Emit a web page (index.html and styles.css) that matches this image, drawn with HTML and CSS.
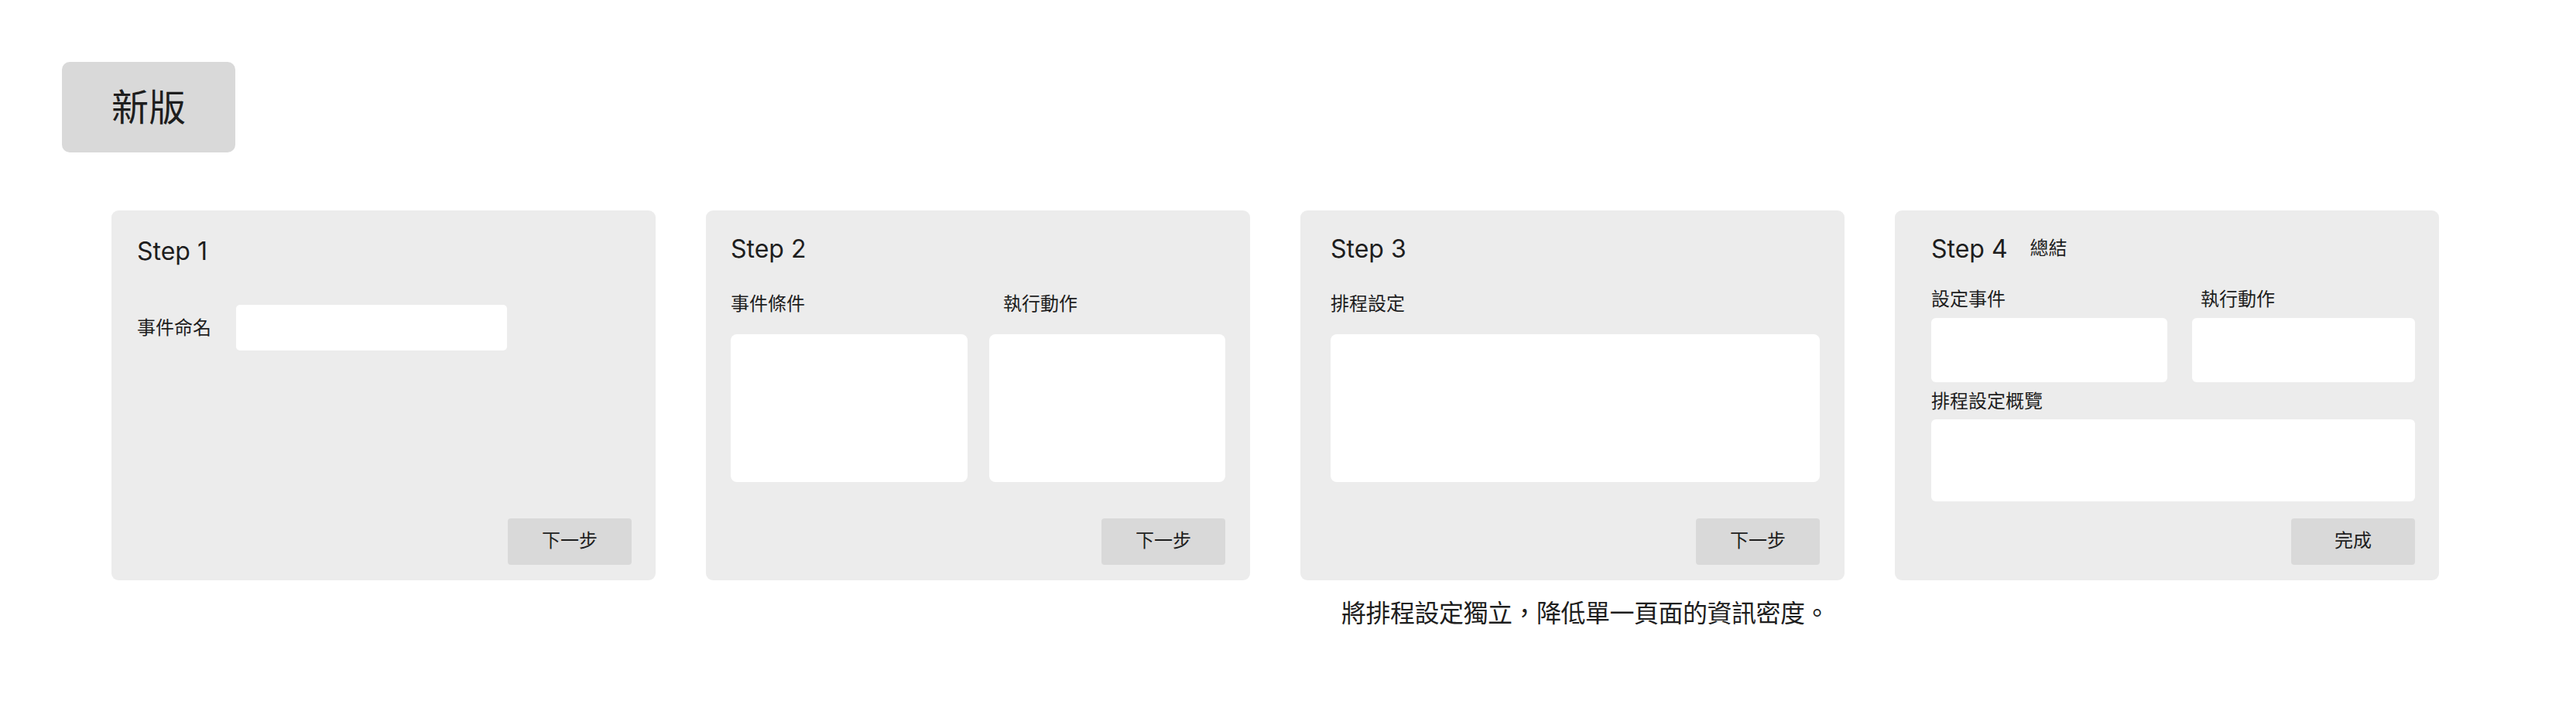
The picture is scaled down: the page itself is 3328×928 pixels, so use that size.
FILE: index.html
```html
<!DOCTYPE html>
<html lang="zh-Hant">
<head>
  <meta charset="UTF-8">
  <title>新版流程</title>
  <link rel="stylesheet" href="styles.css">
</head>
<body>
  <div class="page">
    <div class="tag">新版</div>

    <div class="steps">
      <div class="card card-1">
        <div class="card-head">
          <h3>Step 1</h3>
        </div>
        <div class="field">
          <label>事件命名</label>
          <div class="input"></div>
        </div>
        <button class="btn">下一步</button>
      </div>

      <div class="card card-2">
        <div class="card-head">
          <h3>Step 2</h3>
        </div>
        <div class="cols">
          <div class="col">
            <label>事件條件</label>
            <div class="box box-tall"></div>
          </div>
          <div class="col">
            <label class="shift">執行動作</label>
            <div class="box box-tall"></div>
          </div>
        </div>
        <button class="btn">下一步</button>
      </div>

      <div class="card card-3">
        <div class="card-head">
          <h3>Step 3</h3>
        </div>
        <div class="col">
          <label>排程設定</label>
          <div class="box box-tall"></div>
        </div>
        <button class="btn">下一步</button>
      </div>

      <div class="card card-4">
        <div class="card-head">
          <h3>Step 4</h3>
          <span class="sub">總結</span>
        </div>
        <div class="summary">
          <div class="col">
            <label>設定事件</label>
            <div class="box box-short"></div>
          </div>
          <div class="col">
            <label class="shift-sm">執行動作</label>
            <div class="box box-short"></div>
          </div>
          <div class="col wide">
            <label>排程設定概覽</label>
            <div class="box box-mid"></div>
          </div>
        </div>
        <button class="btn">完成</button>
      </div>

      <p class="note">將排程設定獨立，降低單一頁面的資訊密度。</p>
    </div>
  </div>
</body>
</html>
```

FILE: styles.css
```css
body {
  margin: 0;
  background: #fff;
  color: #1e1e1e;
  font-family: Inter, "Noto Sans CJK TC", sans-serif;
}
.page {
  padding: 80px 0 0 80px;
}
.tag {
  width: 224px;
  height: 117px;
  background: #d9d9d9;
  border-radius: 10px;
  display: flex;
  align-items: center;
  justify-content: center;
  font-size: 48px;
  line-height: 1;
}
.steps {
  margin: 75px 0 0 64px;
  display: grid;
  grid-template-columns: repeat(4, 703px);
  column-gap: 65px;
  row-gap: 24px;
}
.card {
  height: 478px;
  box-sizing: border-box;
  background: #ececec;
  border-radius: 9px;
  padding: 34px 32px 20px 32px;
  display: flex;
  flex-direction: column;
}
.card-1 { padding-top: 37px; padding-left: 33px; padding-right: 31px; }
.card-3 { padding-left: 39px; }
.card-4 { padding-left: 47px; padding-right: 31px; }

.card-head {
  display: flex;
  align-items: flex-start;
  gap: 29px;
}
h3 {
  margin: 0;
  font-size: 32px;
  font-weight: 400;
  line-height: 1;
}
.sub {
  font-size: 24px;
  line-height: 1;
  margin-top: 3px;
}
label {
  font-size: 24px;
  line-height: 1;
  display: block;
}
.field {
  margin-top: 53px;
  display: flex;
  align-items: center;
  gap: 35px;
}
.field label {
  width: 93px;
  white-space: nowrap;
}
.input {
  width: 350px;
  height: 59px;
  background: #fff;
  border-radius: 5px;
}
.cols {
  margin-top: 43px;
  display: grid;
  grid-template-columns: 306px 305px;
  column-gap: 28px;
}
.card-3 .col {
  margin-top: 43px;
}
.col {
  display: flex;
  flex-direction: column;
}
.card-2 .col label,
.card-3 .col label {
  margin-bottom: 27px;
}
.shift { padding-left: 18px; }
.shift-sm { padding-left: 11px; }
.box {
  background: #fff;
  border-radius: 8px;
}
.box-tall { height: 191px; }
.summary {
  margin-top: 37px;
  display: grid;
  grid-template-columns: 305px 288px;
  column-gap: 32px;
  row-gap: 13px;
}
.summary label {
  margin-bottom: 12px;
}
.summary .wide {
  grid-column: 1 / 3;
}
.summary .wide label {
  margin-bottom: 11px;
}
.box-short { height: 83px; border-radius: 6px; }
.box-mid { height: 106px; border-radius: 6px; }
.btn {
  margin-top: auto;
  align-self: flex-end;
  width: 160px;
  height: 60px;
  border: none;
  border-radius: 4px;
  background: #d9d9d9;
  color: #1e1e1e;
  font-family: inherit;
  font-size: 24px;
  line-height: 1;
  padding: 0 0 3px;
}
.note {
  grid-column: 3;
  margin: 0;
  padding-left: 53px;
  font-size: 32px;
  line-height: 1.2;
  letter-spacing: -0.5px;
  white-space: nowrap;
}
```
